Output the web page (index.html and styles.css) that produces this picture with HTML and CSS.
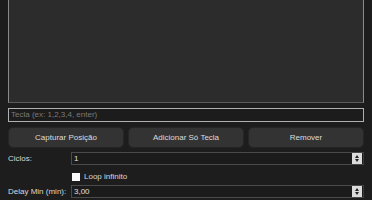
FILE: index.html
```html
<!DOCTYPE html>
<html>
<head>
<meta charset="utf-8">
<link rel="stylesheet" href="styles.css">
</head>
<body>
<div class="frame">
  <div class="editor"></div>
  <div class="key-input">Tecla (ex: 1,2,3,4, enter)</div>
  <div class="buttons">
    <div class="btn">Capturar Posição</div>
    <div class="btn">Adicionar Só Tecla</div>
    <div class="btn">Remover</div>
  </div>
  <div class="row">
    <div class="label">Ciclos:</div>
    <div class="spin"><span class="val">1</span><span class="arrows"><span class="up"></span><span class="down"></span></span></div>
  </div>
  <div class="row check-row">
    <div class="label"></div>
    <div class="check"><span class="box"></span><span>Loop infinito</span></div>
  </div>
  <div class="row">
    <div class="label">Delay Min (min):</div>
    <div class="spin"><span class="val">3,00</span><span class="arrows"><span class="up"></span><span class="down"></span></span></div>
  </div>
</div>
</body>
</html>
```
FILE: styles.css
```css
html, body {
  margin: 0;
  padding: 0;
  background: #1d1d1d;
  overflow: hidden;
}
body {
  font-family: "Liberation Sans", Arial, sans-serif;
  font-size: 8px;
  color: #d8d8d8;
}
.frame {
  margin: 0 8px;
  width: 356px;
}
.editor {
  height: 103px;
  box-sizing: border-box;
  background: #2c2c2c;
  border: 1px solid #8a8a8a;
  border-top: none;
  border-bottom-color: #5a5a5a;
}
.key-input {
  margin-top: 5px;
  height: 14px;
  box-sizing: border-box;
  border: 1px solid #b0b0b0;
  background: #1c1c1c;
  color: #7a7a7a;
  padding: 0 2px;
  line-height: 12px;
}
.buttons {
  display: grid;
  grid-template-columns: 116px 116px 1fr;
  gap: 4px;
  margin-top: 5px;
}
.btn {
  height: 21px;
  box-sizing: border-box;
  background: #333333;
  border: 1px solid #252525;
  border-radius: 5px;
  display: flex;
  align-items: center;
  justify-content: center;
  color: #dcdcdc;
}
.row {
  display: grid;
  grid-template-columns: 63px 1fr;
  align-items: center;
  margin-top: 4px;
}
.spin {
  height: 13px;
  box-sizing: border-box;
  border: 1px solid #4a4a4a;
  border-right-color: #3a3a3a;
  background: #1b1b1b;
  display: flex;
  align-items: center;
  justify-content: space-between;
}
.val {
  padding-left: 2px;
  color: #e0e0e0;
}
.arrows {
  width: 10px;
  height: 11px;
  background: #dcdcdc;
  display: flex;
  flex-direction: column;
  align-items: center;
  justify-content: center;
  gap: 1px;
  margin-right: 1px;
}
.up {
  width: 0; height: 0;
  border-left: 2.5px solid transparent;
  border-right: 2.5px solid transparent;
  border-bottom: 3px solid #222;
}
.down {
  width: 0; height: 0;
  border-left: 2.5px solid transparent;
  border-right: 2.5px solid transparent;
  border-top: 3px solid #222;
}
.check-row {
  margin-top: 7px;
}
.check {
  display: flex;
  align-items: center;
  gap: 4px;
  padding-left: 1px;
}
.box {
  width: 8px;
  height: 8px;
  background: #fafafa;
}
```
